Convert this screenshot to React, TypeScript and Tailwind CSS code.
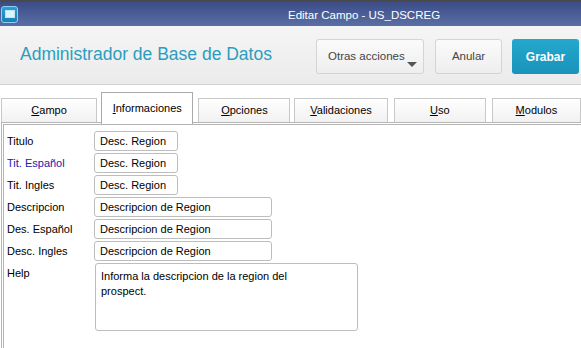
import React from "react";

const U = ({ c, rest }: { c: string; rest: string }) => (
  <span>
    <span className="underline">{c}</span>
    {rest}
  </span>
);

function Tab({ children, active, w, ml }: { children: React.ReactNode; active?: boolean; w: string; ml: string }) {
  if (active) {
    return (
      <div className={`${w} ${ml} h-[32px] -mb-[2px] relative z-10 bg-white border border-[#a9a9a9] border-b-0 flex items-start justify-center pt-[7px] text-[11px] text-black`}>
        {children}
      </div>
    );
  }
  return (
    <div className={`${w} ${ml} h-[24px] bg-gradient-to-b from-[#ffffff] to-[#f1f1f1] border border-[#c8c8c8] border-b-0 flex items-center justify-center text-[11px] text-black`}>
      {children}
    </div>
  );
}

function Row({ label, value, wide, blue }: { label: string; value: string; wide?: boolean; blue?: boolean }) {
  return (
    <div className="flex items-center h-[22px]">
      <div className={`w-[87px] text-[11px] ${blue ? "text-[#2020b0]" : "text-black"}`}>{label}</div>
      <div className={`${wide ? "w-[178px]" : "w-[84px]"} h-[20px] border border-[#bdbdbd] rounded-[3px] bg-white flex items-center pl-[5px] text-[11px] text-black`}>
        {value}
      </div>
    </div>
  );
}

export default function App() {
  return (
    <div className="w-[581px] h-[348px] overflow-hidden bg-white flex flex-col" style={{ fontFamily: '"Liberation Sans", Arial, sans-serif' }}>
      <div className="h-[2px] bg-[#4a4a4a]" />
      {/* title bar */}
      <div className="h-[24px] bg-gradient-to-b from-[#3b4c86] to-[#5b6fa6] flex items-center relative">
        <div className="ml-[1px] w-[17px] h-[17px] rounded-[3px] border border-[#8fd0ee] bg-gradient-to-b from-[#2aa0d8] to-[#1a80b8] flex items-center justify-center">
          <div className="w-[10px] h-[8px] bg-[#dff3fb] border border-[#bfe5f5]" />
        </div>
        <div className="absolute left-[288px] top-[5px] text-[11.5px] text-white">
          Editar Campo - US_DSCREG
        </div>
      </div>
      {/* header */}
      <div className="h-[59px] bg-gradient-to-b from-[#f5f5f5] to-[#ebebeb] border-b border-[#d2d2d2] flex items-center pl-[20px] pr-[2px]">
        <div className="text-[17.5px] text-[#2a9dc0] flex-1 -mt-[2px]">Administrador de Base de Datos</div>
        <div className="w-[108px] h-[35px] rounded-[3px] border border-[#d4d4d4] bg-gradient-to-b from-[#fbfbfb] to-[#eeeeee] relative flex items-center pl-[11px] text-[11.5px] text-[#444] mt-[3px]">
          Otras acciones
          <div className="absolute right-[6px] bottom-[6px] w-0 h-0 border-l-[5px] border-r-[5px] border-t-[5px] border-l-transparent border-r-transparent border-t-[#555]" />
        </div>
        <div className="ml-[11px] w-[67px] h-[35px] rounded-[3px] border border-[#d4d4d4] bg-gradient-to-b from-[#fbfbfb] to-[#eeeeee] flex items-center justify-center text-[11.5px] text-[#444] mt-[3px]">
          Anular
        </div>
        <div className="ml-[10px] w-[67px] h-[35px] rounded-[3px] bg-gradient-to-b from-[#24a8cd] to-[#1a93bb] flex items-center justify-center text-[12px] font-bold text-white mt-[3px]">
          Grabar
        </div>
      </div>
      {/* tabs */}
      <div className="flex items-end pl-[1px] mt-[5px] h-[32px] relative">
        <Tab w="w-[97px]" ml="ml-0"><U c="C" rest="ampo" /></Tab>
        <Tab w="w-[93px]" ml="ml-[4px]" active><U c="I" rest="nformaciones" /></Tab>
        <Tab w="w-[93px]" ml="ml-[5px]"><U c="O" rest="pciones" /></Tab>
        <Tab w="w-[94px]" ml="ml-[4px]"><U c="V" rest="alidaciones" /></Tab>
        <Tab w="w-[93px]" ml="ml-[6px]"><U c="U" rest="so" /></Tab>
        <Tab w="w-[90px]" ml="ml-[6px]"><U c="M" rest="odulos" /></Tab>
      </div>
      {/* panel */}
      <div className="flex-1 ml-[1px] border-t-[3px] border-l-[3px] border-double border-[#b5b5b5] pl-[3px] pt-[5px]">
        <Row label="Titulo" value="Desc. Region" />
        <Row label="Tit. Español" value="Desc. Region" blue />
        <Row label="Tit. Ingles" value="Desc. Region" />
        <Row label="Descripcion" value="Descripcion de Region" wide />
        <Row label="Des. Español" value="Descripcion de Region" wide />
        <Row label="Desc. Ingles" value="Descripcion de Region" wide />
        <div className="flex mt-[1px]">
          <div className="w-[88px] text-[11px] text-black pt-[2px]">Help</div>
          <div className="w-[263px] h-[68px] border border-[#bdbdbd] rounded-[3px] bg-white px-[5px] pt-[5px] text-[11px] leading-[15px] text-black">
            Informa la descripcion de la region del<br />prospect.
          </div>
        </div>
      </div>
    </div>
  );
}
